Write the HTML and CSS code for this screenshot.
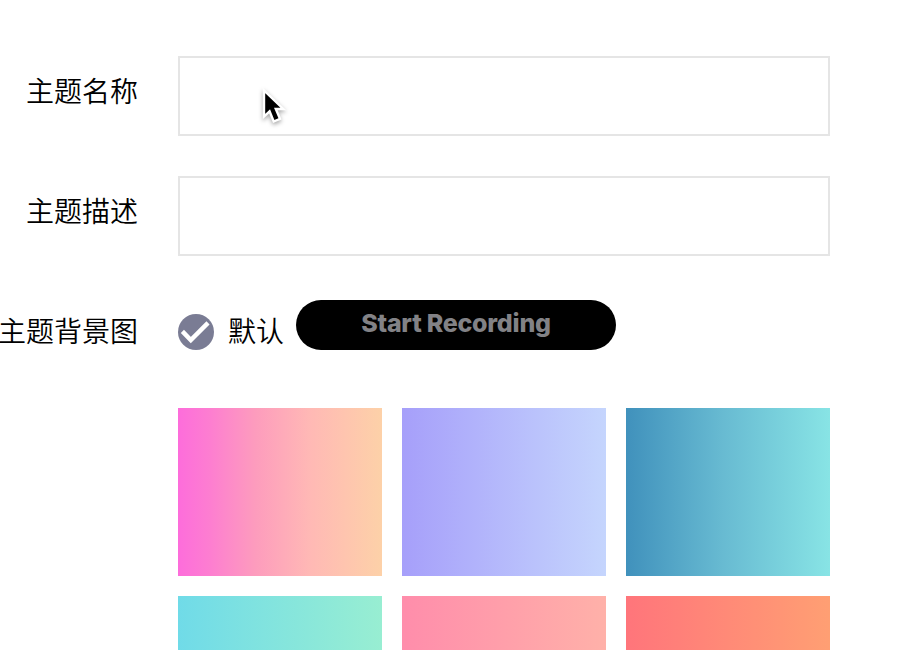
FILE: index.html
```html
<!DOCTYPE html>
<html lang="zh-CN">
<head>
<meta charset="utf-8">
<title>主题</title>
<link rel="stylesheet" href="styles.css">
</head>
<body>
<form class="form">
  <div class="row">
    <label class="label" for="name">主题名称</label>
    <input class="input" id="name" type="text">
  </div>
  <div class="row">
    <label class="label" for="desc">主题描述</label>
    <input class="input" id="desc" type="text">
  </div>
  <div class="row">
    <span class="label">主题背景图</span>
    <div class="choice">
      <svg class="check" viewBox="0 0 36 36"><circle cx="18" cy="18" r="18" fill="#7a7c94"/><path d="M4.4 17.4 12.8 26 30 8.9" fill="none" stroke="#fff" stroke-width="4.4"/></svg>
      <span class="choice-text">默认</span>
    </div>
  </div>
  <div class="swatches">
    <div class="swatch pink"></div>
    <div class="swatch lavender"></div>
    <div class="swatch ocean"></div>
    <div class="swatch mint"></div>
    <div class="swatch rose"></div>
    <div class="swatch coral"></div>
  </div>
</form>
<div class="record">Start Recording</div>
<svg class="cursor" viewBox="0 0 34 44"><path d="M8 6.5V32.6L13.6 27.4 17.7 37.5 24 34.8 19.8 25H27.3Z" fill="#000" stroke="#fff" stroke-width="2.4" stroke-linejoin="miter"/></svg>
</body>
</html>
```
FILE: styles.css
```css
* { box-sizing: border-box; }

body {
  margin: 0;
  height: 650px;
  overflow: hidden;
  position: relative;
  background: #fff;
  color: #000;
  font: 350 28px/68px "Noto Sans CJK SC DemiLight", "Noto Sans CJK SC", sans-serif;
}

.form {
  width: 830px;
  padding-top: 56px;
}

.row {
  display: grid;
  grid-template-columns: 138px 652px;
  column-gap: 40px;
  height: 80px;
  margin-bottom: 40px;
}

.label {
  display: flex;
  justify-content: flex-end;
  height: 72px;
  white-space: nowrap;
}

.input {
  width: 100%;
  height: 80px;
  padding: 0 20px;
  border: 2px solid #e5e5e5;
  border-radius: 0;
  outline: none;
  background: #fff;
  font: inherit;
}

.choice {
  display: flex;
  align-items: center;
  gap: 14px;
  height: 72px;
}

.choice-text {
  height: 72px;
}

.check {
  width: 36px;
  height: 36px;
}

.swatches {
  display: grid;
  grid-template-columns: repeat(3, 204px);
  grid-template-rows: 168px 54px;
  gap: 20px;
  margin: -8px 0 0 178px;
}

.pink { background: linear-gradient(90deg, #fd6ddb, #fd7dd1 15%, #fd9cbd 38%, #ffb9b5 65%, #fdd1a8); }
.lavender { background: linear-gradient(90deg, #a69ffa, #c5d5fd); }
.ocean { background: linear-gradient(90deg, #4091bc, #68bbd2 48%, #88e4e5); }
.mint { background: linear-gradient(90deg, #70dbe8, #98eed2); }
.rose { background: linear-gradient(90deg, #ff8dab, #ffb1a9); }
.coral { background: linear-gradient(90deg, #ff757b, #ff9f73); }

.record {
  position: absolute;
  left: 296px;
  top: 300px;
  width: 320px;
  height: 50px;
  border-radius: 25px;
  background: #000;
  color: #828286;
  font: 800 25px/47px Inter, sans-serif;
  letter-spacing: -0.25px;
  text-align: center;
}

.cursor {
  position: absolute;
  left: 256px;
  top: 84px;
  width: 34px;
  height: 44px;
  filter: drop-shadow(0 2px 2px rgba(0, 0, 0, 0.35));
}
```
